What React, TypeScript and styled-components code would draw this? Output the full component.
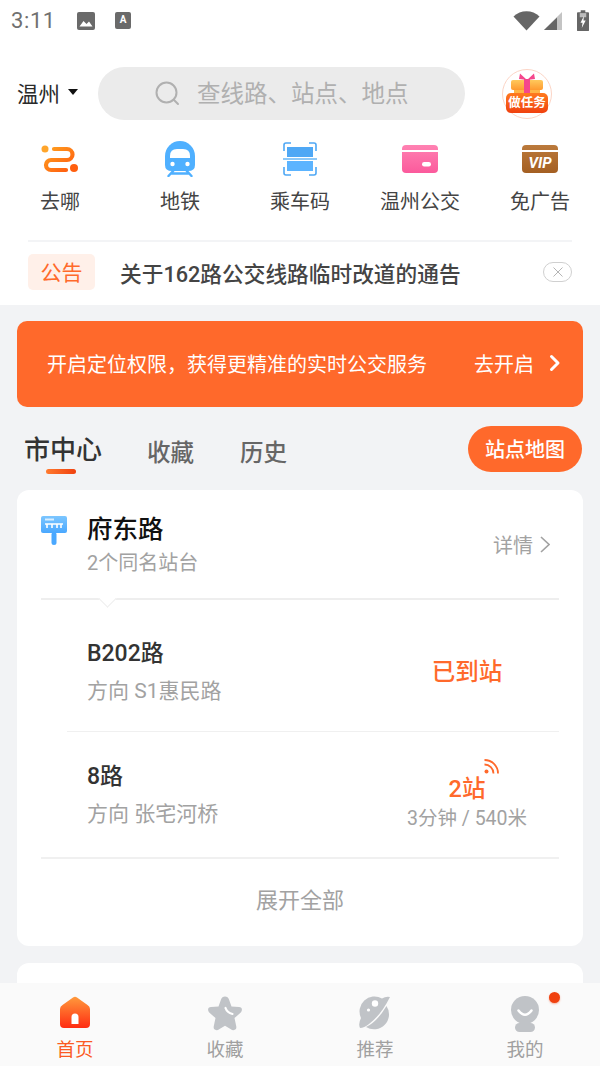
import styled, { createGlobalStyle } from "styled-components";

const GlobalStyle = createGlobalStyle`
  html, body {
    margin: 0;
    padding: 0;
    background: #fff;
  }
  * {
    box-sizing: border-box;
  }
`;

const Phone = styled.div`
  width: 600px;
  height: 1066px;
  display: flex;
  flex-direction: column;
  overflow: hidden;
  background: #f2f3f5;
  font-family: Roboto, "Noto Sans CJK SC", sans-serif;
  color: #333;
`;

const TopArea = styled.div`
  background: #fff;
  height: 305px;
  flex-shrink: 0;
`;

const StatusBar = styled.div`
  height: 41px;
  padding: 0 11px;
  display: flex;
  align-items: center;
  color: #707070;
`;

const Clock = styled.span`
  font-size: 22px;
  letter-spacing: 0.6px;
  width: 65px;
`;

const StatusLeft = styled.div`
  display: flex;
  align-items: center;
  flex: 1;
  gap: 19px;
`;

const StatusRight = styled.div`
  display: flex;
  align-items: center;
  gap: 5px;
`;

const KeyboardBadge = styled.span`
  width: 16px;
  height: 17px;
  border-radius: 2px;
  background: #6a6a6a;
  color: #fff;
  font-size: 10px;
  font-weight: 700;
  line-height: 15px;
  text-align: center;
`;

const Header = styled.div`
  height: 53px;
  margin-top: 26px;
  padding-left: 17px;
  display: flex;
  align-items: center;
`;

const City = styled.div`
  width: 81px;
  display: flex;
  align-items: center;
  padding-bottom: 3px;
  font-size: 21.5px;
  color: #2a2a2a;
`;

const Caret = styled.span`
  margin-left: 8px;
  width: 0;
  height: 0;
  border-left: 5.5px solid transparent;
  border-right: 5.5px solid transparent;
  border-top: 6px solid #111;
`;

const SearchBox = styled.div`
  width: 367px;
  height: 53px;
  border-radius: 27px;
  background: #ebebeb;
  display: flex;
  align-items: center;
  padding-left: 57px;
  gap: 17px;
  font-size: 23.5px;
  color: #b0b0b0;
`;

const SearchHint = styled.span`
  padding-bottom: 4px;
`;

const TaskButton = styled.div`
  position: relative;
  width: 50px;
  height: 50px;
  margin-left: 37px;
  border-radius: 50%;
  border: 1.5px solid #fcd5c6;
  background: #fff;
  display: flex;
  justify-content: center;
`;

const TaskLabel = styled.span`
  position: absolute;
  left: 3px;
  right: 3px;
  top: 23px;
  height: 20px;
  border-radius: 5px;
  background: linear-gradient(180deg, #ff7a1f, #f0410f);
  color: #fff;
  font-size: 12.5px;
  font-weight: 700;
  line-height: 19px;
  text-align: center;
  white-space: nowrap;
`;

const Shortcuts = styled.div`
  display: grid;
  grid-template-columns: repeat(5, 120px);
  margin-top: 19px;
`;

const Shortcut = styled.div`
  display: flex;
  flex-direction: column;
  align-items: center;
  font-size: 20px;
  color: #444;
`;

const ShortcutIcon = styled.div`
  height: 40px;
  display: flex;
  align-items: center;
  justify-content: center;
  margin-bottom: 7px;
`;

const Notice = styled.div`
  margin: 25px 28px 0;
  border-top: 2px solid #f3f4f6;
  height: 62px;
  display: flex;
  align-items: center;
`;

const NoticeTag = styled.span`
  width: 67px;
  height: 36px;
  border-radius: 5px;
  background: #fff0e9;
  color: #ff6a2b;
  font-size: 21px;
  line-height: 38px;
  text-align: center;
`;

const NoticeText = styled.span`
  margin-left: 25px;
  flex: 1;
  font-size: 21.7px;
  font-weight: 500;
  color: #444;
`;

const NoticeClose = styled.div`
  width: 29px;
  height: 20px;
  border-radius: 10px;
  border: 1px solid #d0d0d0;
  display: flex;
  align-items: center;
  justify-content: center;
`;

const Content = styled.div`
  flex: 1;
  min-height: 0;
  overflow: hidden;
  padding: 16px 17px 0;
`;

const Banner = styled.div`
  height: 86px;
  border-radius: 10px;
  background: #ff692b;
  color: #fff;
  font-size: 20px;
  display: flex;
  align-items: center;
  padding: 0 22px 2px 30px;
`;

const BannerText = styled.span`
  flex: 1;
`;

const BannerAction = styled.span`
  margin-right: 15px;
`;

const TabRow = styled.div`
  height: 83px;
  display: flex;
  align-items: flex-start;
  padding: 20px 1px 0 7px;
`;

const Tab = styled.div<{ $active?: boolean }>`
  position: relative;
  margin-right: ${(p) => (p.$active ? "45px" : "46px")};
  font-size: ${(p) => (p.$active ? "26px" : "23.5px")};
  font-weight: 500;
  color: ${(p) => (p.$active ? "#333" : "#666")};
  line-height: 46px;
  padding-top: ${(p) => (p.$active ? "0" : "3px")};
`;

const TabLine = styled.span`
  position: absolute;
  left: 22px;
  top: 42px;
  width: 30px;
  height: 5px;
  border-radius: 3px;
  background: linear-gradient(90deg, #ff7a2e, #f0410f);
`;

const MapButton = styled.div`
  margin-left: auto;
  margin-top: -1px;
  width: 114px;
  height: 46px;
  border-radius: 23px;
  background: #ff692b;
  color: #fff;
  font-size: 20px;
  font-weight: 500;
  line-height: 48px;
  text-align: center;
`;

const Card = styled.div`
  background: #fff;
  border-radius: 12px;
  padding: 0 24px;
  height: 456px;
  display: flex;
  flex-direction: column;
`;

const NextCard = styled(Card)`
  margin-top: 17px;
  height: 60px;
`;

const StopHead = styled.div`
  height: 110px;
  position: relative;
  border-bottom: 2px solid #eeeeee;
  display: flex;
  align-items: flex-start;
  padding-top: 22px;
`;

const StopIcon = styled.div`
  width: 46px;
  padding-top: 4px;
`;

const StopInfo = styled.div`
  flex: 1;
`;

const StopName = styled.div`
  font-size: 25.5px;
  font-weight: 500;
  line-height: 34px;
  color: #111;
`;

const StopSub = styled.div`
  font-size: 20px;
  line-height: 30px;
  margin-top: 2px;
  color: #a2a2a2;
`;

const Details = styled.div`
  display: flex;
  align-items: center;
  gap: 7px;
  margin-top: 18px;
  padding-right: 9px;
  font-size: 20px;
  color: #a2a2a2;
`;

const Notch = styled.span`
  position: absolute;
  left: 60px;
  bottom: -7px;
  width: 13px;
  height: 13px;
  background: #fff;
  border-right: 1.5px solid #eeeeee;
  border-bottom: 1.5px solid #eeeeee;
  transform: rotate(45deg);
`;

const LineRow = styled.div<{ $last?: boolean }>`
  height: ${(p) => (p.$last ? "127px" : "132px")};
  margin-left: ${(p) => (p.$last ? "0" : "26px")};
  padding-left: ${(p) => (p.$last ? "46px" : "20px")};
  padding-top: ${(p) => (p.$last ? "0" : "12px")};
  border-bottom: ${(p) => (p.$last ? "2px" : "1.5px")} solid #f0f0f0;
  display: flex;
  align-items: center;
`;

const LineInfo = styled.div`
  width: 318px;
`;

const LineName = styled.div`
  font-size: 23px;
  font-weight: 500;
  line-height: 32px;
  color: #333;
`;

const LineDirection = styled.div`
  font-size: 21px;
  line-height: 30px;
  margin-top: 6px;
  color: #a2a2a2;
`;

const Arrival = styled.div<{ $offset?: boolean }>`
  width: 124px;
  margin-top: ${(p) => (p.$offset ? "17px" : "0")};
  display: flex;
  flex-direction: column;
  align-items: center;
  white-space: nowrap;
`;

const ArrivalMain = styled.div`
  position: relative;
  color: #ff692b;
  font-size: 23.5px;
  font-weight: 500;
  line-height: 30px;
`;

const SignalIcon = styled.span`
  position: absolute;
  right: -14px;
  top: -15px;
  line-height: 0;
`;

const ArrivalSub = styled.div`
  color: #a2a2a2;
  font-size: 19.5px;
  line-height: 29px;
`;

const ExpandRow = styled.div`
  flex: 1;
  display: flex;
  align-items: center;
  justify-content: center;
  padding-bottom: 10px;
  font-size: 22px;
  color: #a2a2a2;
`;

const TabBar = styled.div`
  height: 83px;
  flex-shrink: 0;
  background: #fafafa;
  display: grid;
  grid-template-columns: 150px 150px 150px 150px;
`;

const BarItem = styled.div<{ $active?: boolean }>`
  position: relative;
  display: flex;
  flex-direction: column;
  align-items: center;
  padding-top: 13px;
  font-size: 18.5px;
  color: ${(p) => (p.$active ? "#fb5a23" : "#a0a0a0")};
`;

const BarIcon = styled.div`
  height: 38px;
  line-height: 0;
  margin-bottom: 1px;
`;

const RedDot = styled.span`
  position: absolute;
  left: 99px;
  top: 9px;
  width: 11px;
  height: 11px;
  border-radius: 50%;
  background: #f0410f;
  box-shadow: 0 1px 2px rgba(240, 65, 15, 0.4);
`;

const ImageStatusIcon = () => (
  <svg width="20" height="20" viewBox="0 0 20 20">
    <rect x="1" y="1" width="18" height="18" rx="2" fill="#6a6a6a" />
    <path d="M3.5 15.5 L7.5 10 L10.5 13 L13 10.5 L16.5 15.5 Z" fill="#fff" />
  </svg>
);

const WifiIcon = () => (
  <svg width="27" height="21" viewBox="0 0 27 21" style={{ marginRight: -1 }}>
    <path d="M0.5 6.5 C7.5 -0.5 19.5 -0.5 26.5 6.5 L13.5 20.5 Z" fill="#666" />
  </svg>
);

const CellIcon = () => (
  <svg width="19" height="20" viewBox="0 0 19 20">
    <path d="M18 1 V19 H0 Z" fill="#c4c4c4" />
    <path d="M13 6.5 V19 H0 Z" fill="#666" />
  </svg>
);

const BatteryIcon = () => (
  <svg width="12" height="23" viewBox="0 0 13 23" style={{ marginLeft: 9 }}>
    <path d="M4 0.5 H9 V2.5 H12 Q13 2.5 13 3.5 V22 Q13 23 12 23 H1 Q0 23 0 22 V3.5 Q0 2.5 1 2.5 H4 Z" fill="#666" />
    <path d="M3 3.5 H10 V8 H3 Z" fill="#bbb" />
    <path d="M7.5 6.5 L3.8 14 H6 L5.2 19.5 L9.4 11.5 H7 Z" fill="#fff" />
  </svg>
);

const SearchIcon = () => (
  <svg width="25" height="25" viewBox="0 0 25 25" fill="none" stroke="#b0b0b0" strokeWidth="2">
    <circle cx="11.5" cy="11.5" r="10" />
    <path d="M19 19 L23 23" strokeLinecap="round" />
  </svg>
);

const GiftIcon = () => (
  <svg width="34" height="30" viewBox="0 0 34 30" style={{ marginTop: 3 }}>
    <defs>
      <linearGradient id="giftBox" x1="0" y1="0" x2="0" y2="1">
        <stop offset="0" stopColor="#ffc95c" />
        <stop offset="1" stopColor="#ff9a30" />
      </linearGradient>
    </defs>
    <rect x="1" y="7" width="32" height="10" rx="2" fill="url(#giftBox)" />
    <rect x="4" y="17" width="26" height="13" fill="#ffb547" />
    <rect x="14" y="6" width="6" height="24" fill="#f5478c" />
    <path d="M17 7 L10 0.5 L9 6 Z M17 7 L24 0.5 L25 6 Z" fill="#f5478c" />
  </svg>
);

const RouteIcon = () => (
  <svg width="38" height="28" viewBox="0 0 38 28" fill="none">
    <defs>
      <linearGradient id="routeLine" x1="0" y1="0" x2="1" y2="1">
        <stop offset="0" stopColor="#ffa01f" />
        <stop offset="1" stopColor="#ff5a0f" />
      </linearGradient>
    </defs>
    <circle cx="4" cy="4" r="3.5" fill="#ffa52b" />
    <path
      d="M13 4 H26 A5.5 5.5 0 0 1 26 15 H10 A5 5 0 0 0 10 25 H25"
      stroke="url(#routeLine)"
      strokeWidth="4.2"
      strokeLinecap="round"
    />
    <circle cx="33" cy="23" r="4" fill="#ff5f0f" />
  </svg>
);

const MetroIcon = () => (
  <svg width="30" height="36" viewBox="0 0 30 36">
    <path d="M0 15 A15 15 0 0 1 30 15 V24 Q30 30 23 30 H7 Q0 30 0 24 Z" fill="#4fb0ff" />
    <path d="M5 15 Q5 8 12 8 H18 Q25 8 25 15 V17 H5 Z" fill="#fff" />
    <circle cx="7.5" cy="23" r="2.2" fill="#fff" />
    <circle cx="22.5" cy="23" r="2.2" fill="#fff" />
    <path d="M9 29 L3.5 35 M21 29 L26.5 35 M7 32.5 H23" stroke="#4fb0ff" strokeWidth="2.4" strokeLinecap="round" />
  </svg>
);

const ScanIcon = () => (
  <svg width="34" height="34" viewBox="0 0 34 34">
    <path d="M1 9 V3 Q1 1 3 1 H8 M26 1 H31 Q33 1 33 3 V9 M1 25 V31 Q1 33 3 33 H8 M26 33 H31 Q33 33 33 31 V25" fill="none" stroke="#4fa8f5" strokeWidth="1.6" />
    <rect x="4" y="5" width="26" height="10" fill="#4fa8f5" />
    <rect x="4" y="19" width="26" height="10" fill="#5cb4ff" />
    <rect x="0" y="16" width="34" height="2" fill="#8cc8f8" />
  </svg>
);

const CardIcon = () => (
  <svg width="36" height="28" viewBox="0 0 36 28">
    <defs>
      <linearGradient id="busCard" x1="0" y1="0" x2="0" y2="1">
        <stop offset="0" stopColor="#ff82b2" />
        <stop offset="1" stopColor="#fb5a9c" />
      </linearGradient>
    </defs>
    <rect width="36" height="28" rx="4" fill="url(#busCard)" />
    <rect y="5" width="36" height="2" fill="#fff" />
    <rect x="20" y="17" width="9" height="4.5" rx="2.2" fill="#fff" />
  </svg>
);

const VipIcon = () => (
  <svg width="36" height="28" viewBox="0 0 36 28">
    <defs>
      <linearGradient id="vipCard" x1="0" y1="0" x2="0" y2="1">
        <stop offset="0" stopColor="#bb7a3c" />
        <stop offset="1" stopColor="#a45f22" />
      </linearGradient>
    </defs>
    <rect width="36" height="28" rx="4" fill="url(#vipCard)" />
    <rect y="5" width="36" height="2" fill="#fff" />
    <text x="18" y="23" textAnchor="middle" fontSize="15" fontWeight="700" fontStyle="italic" fontFamily="Roboto, sans-serif" fill="#fff">
      VIP
    </text>
  </svg>
);

const CloseIcon = () => (
  <svg width="10" height="10" viewBox="0 0 10 10" stroke="#b5b5b5" strokeWidth="1">
    <path d="M0.5 0.5 L9.5 9.5 M9.5 0.5 L0.5 9.5" />
  </svg>
);

const BannerChevron = () => (
  <svg width="12" height="18" viewBox="0 0 12 18" fill="none" stroke="#fff" strokeWidth="3" strokeLinecap="round" strokeLinejoin="round">
    <path d="M2.5 2.5 L9 9 L2.5 15.5" />
  </svg>
);

const StopSignIcon = () => (
  <svg width="26" height="29" viewBox="0 0 26 29">
    <defs>
      <linearGradient id="stopSign" x1="0" y1="0" x2="0" y2="1">
        <stop offset="0" stopColor="#7cc6ff" />
        <stop offset="1" stopColor="#4aa8ff" />
      </linearGradient>
    </defs>
    <rect x="0" y="0" width="26" height="17" rx="2" fill="url(#stopSign)" />
    <rect x="4" y="2.5" width="9" height="2" fill="#d8eeff" />
    <path d="M4 8 H22 M6 8 V12 M11 8 V12 M16 8 V12 M20 8 V12" stroke="#fff" strokeWidth="1.6" />
    <rect x="10.5" y="16" width="5" height="13" rx="2.5" fill="#4aa8ff" />
  </svg>
);

const DetailChevron = () => (
  <svg width="10" height="17" viewBox="0 0 10 17" fill="none" stroke="#a2a2a2" strokeWidth="1.6">
    <path d="M1 1 L9 8.5 L1 16" />
  </svg>
);

const SignalGlyph = () => (
  <svg width="15" height="15" viewBox="0 0 15 15" fill="none" stroke="#ff692b" strokeWidth="1.8">
    <path d="M0.5 1 A13.5 13.5 0 0 1 14 14.5" />
    <path d="M0.5 5.5 A9 9 0 0 1 9.5 14.5" />
    <circle cx="2.5" cy="12.5" r="2" fill="#ff692b" stroke="none" />
  </svg>
);

const HomeIcon = () => (
  <svg width="30" height="38" viewBox="0 0 30 38">
    <defs>
      <linearGradient id="homeFill" x1="0" y1="0" x2="0" y2="1">
        <stop offset="0" stopColor="#ff9a3c" />
        <stop offset="1" stopColor="#ff2c12" />
      </linearGradient>
    </defs>
    <path d="M13 1.5 Q15 0 17 1.5 L27.5 9 Q30 10.5 30 13 V28 Q30 32 26 32 H4 Q0 32 0 28 V13 Q0 10.5 2.5 9 Z" fill="url(#homeFill)" />
    <path d="M11.5 28 V21 A3.5 3.5 0 0 1 18.5 21 V28 Z" fill="#fff" />
  </svg>
);

const StarIcon = () => (
  <svg width="34" height="36" viewBox="0 0 34 36">
    <path
      d="M17 0.5 Q20 0.5 21 3.5 L23.5 10.5 L31 11 Q34.5 11.5 33.8 14.5 Q33.5 16 32 17.2 L26.5 22 L28.2 30 Q29 34 25.5 34.2 Q24 34.2 22.5 33 L17 29.8 L11.5 33 Q10 34.2 8.5 34.2 Q5 34 5.8 30 L7.5 22 L2 17.2 Q0.5 16 0.2 14.5 Q-0.5 11.5 3 11 L10.5 10.5 L13 3.5 Q14 0.5 17 0.5 Z"
      fill="#c0c3c7"
    />
    <path d="M17.5 12 Q19 16.5 24.5 18" fill="none" stroke="#fff" strokeWidth="2.2" strokeLinecap="round" />
  </svg>
);

const PlanetIcon = () => (
  <svg width="32" height="36" viewBox="0 0 32 36">
    <path d="M31 1 Q27 0 23 2.5 A15 15 0 0 0 2 22 Q-1 28 1 32 Q5 32 10 28 Q22 19 31 1 Z" fill="#c0c3c7" />
    <path d="M27.5 10 A15 15 0 0 1 7 31 Q18 26 27.5 10 Z" fill="#c0c3c7" />
    <circle cx="16" cy="7.5" r="3.2" fill="#fff" />
    <circle cx="9.5" cy="14" r="1.6" fill="#fff" />
  </svg>
);

const ProfileIcon = () => (
  <svg width="28" height="36" viewBox="0 0 28 36">
    <circle cx="14" cy="14" r="14" fill="#c0c3c7" />
    <path d="M7.5 14.5 Q14 23 20.5 14.5" fill="none" stroke="#fff" strokeWidth="2.6" strokeLinecap="round" />
    <rect x="4" y="27" width="20" height="9" rx="4.5" fill="#c0c3c7" />
  </svg>
);

const shortcuts = [
  { label: "去哪", icon: <RouteIcon /> },
  { label: "地铁", icon: <MetroIcon /> },
  { label: "乘车码", icon: <ScanIcon /> },
  { label: "温州公交", icon: <CardIcon /> },
  { label: "免广告", icon: <VipIcon /> },
];

const App = () => {
  return (
    <Phone>
      <GlobalStyle />
      <TopArea>
        <StatusBar>
          <Clock>3:11</Clock>
          <StatusLeft>
            <ImageStatusIcon />
            <KeyboardBadge>A</KeyboardBadge>
          </StatusLeft>
          <StatusRight>
            <WifiIcon />
            <CellIcon />
            <BatteryIcon />
          </StatusRight>
        </StatusBar>
        <Header>
          <City>
            温州
            <Caret />
          </City>
          <SearchBox>
            <SearchIcon />
            <SearchHint>查线路、站点、地点</SearchHint>
          </SearchBox>
          <TaskButton>
            <GiftIcon />
            <TaskLabel>做任务</TaskLabel>
          </TaskButton>
        </Header>
        <Shortcuts>
          {shortcuts.map((item) => (
            <Shortcut key={item.label}>
              <ShortcutIcon>{item.icon}</ShortcutIcon>
              {item.label}
            </Shortcut>
          ))}
        </Shortcuts>
        <Notice>
          <NoticeTag>公告</NoticeTag>
          <NoticeText>关于162路公交线路临时改道的通告</NoticeText>
          <NoticeClose>
            <CloseIcon />
          </NoticeClose>
        </Notice>
      </TopArea>
      <Content>
        <Banner>
          <BannerText>开启定位权限，获得更精准的实时公交服务</BannerText>
          <BannerAction>去开启</BannerAction>
          <BannerChevron />
        </Banner>
        <TabRow>
          <Tab $active>
            市中心
            <TabLine />
          </Tab>
          <Tab>收藏</Tab>
          <Tab>历史</Tab>
          <MapButton>站点地图</MapButton>
        </TabRow>
        <Card>
          <StopHead>
            <StopIcon>
              <StopSignIcon />
            </StopIcon>
            <StopInfo>
              <StopName>府东路</StopName>
              <StopSub>2个同名站台</StopSub>
            </StopInfo>
            <Details>
              详情
              <DetailChevron />
            </Details>
            <Notch />
          </StopHead>
          <LineRow>
            <LineInfo>
              <LineName>B202路</LineName>
              <LineDirection>方向 S1惠民路</LineDirection>
            </LineInfo>
            <Arrival>
              <ArrivalMain>已到站</ArrivalMain>
            </Arrival>
          </LineRow>
          <LineRow $last>
            <LineInfo>
              <LineName>8路</LineName>
              <LineDirection>方向 张宅河桥</LineDirection>
            </LineInfo>
            <Arrival $offset>
              <ArrivalMain>
                2站
                <SignalIcon>
                  <SignalGlyph />
                </SignalIcon>
              </ArrivalMain>
              <ArrivalSub>3分钟 / 540米</ArrivalSub>
            </Arrival>
          </LineRow>
          <ExpandRow>展开全部</ExpandRow>
        </Card>
        <NextCard />
      </Content>
      <TabBar>
        <BarItem $active>
          <BarIcon>
            <HomeIcon />
          </BarIcon>
          首页
        </BarItem>
        <BarItem>
          <BarIcon>
            <StarIcon />
          </BarIcon>
          收藏
        </BarItem>
        <BarItem>
          <BarIcon>
            <PlanetIcon />
          </BarIcon>
          推荐
        </BarItem>
        <BarItem>
          <BarIcon>
            <ProfileIcon />
          </BarIcon>
          我的
          <RedDot />
        </BarItem>
      </TabBar>
    </Phone>
  );
};

export default App;
